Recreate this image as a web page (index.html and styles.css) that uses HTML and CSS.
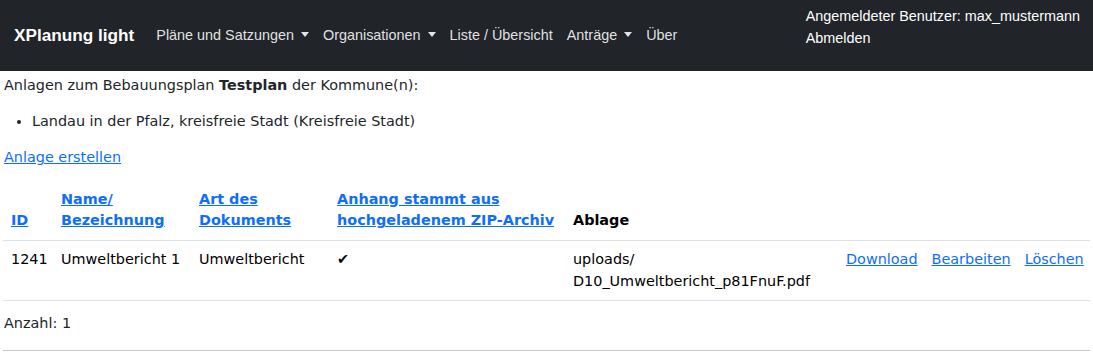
FILE: index.html
```html
<!DOCTYPE html>
<html lang="de">
<head>
<meta charset="utf-8">
<title>XPlanung light</title>
<link rel="stylesheet" href="styles.css">
</head>
<body>
<nav class="navbar">
  <a class="brand" href="#">XPlanung light</a>
  <ul class="nav">
    <li><a href="#" class="dropdown">Pläne und Satzungen</a></li>
    <li><a href="#" class="dropdown">Organisationen</a></li>
    <li><a href="#">Liste / Übersicht</a></li>
    <li><a href="#" class="dropdown">Anträge</a></li>
    <li><a href="#">Über</a></li>
  </ul>
  <div class="user">
    <div>Angemeldeter Benutzer: max_mustermann</div>
    <a href="#">Abmelden</a>
  </div>
</nav>
<main class="content">
  <p class="intro">Anlagen zum Bebauungsplan <b>Testplan</b> der Kommune(n):</p>
  <ul class="kommunen">
    <li>Landau in der Pfalz, kreisfreie Stadt (Kreisfreie Stadt)</li>
  </ul>
  <p class="create"><a href="#">Anlage erstellen</a></p>
  <table class="table">
    <thead>
      <tr>
        <th class="c-id"><a href="#">ID</a></th>
        <th class="c-name"><a href="#">Name/<br>Bezeichnung</a></th>
        <th class="c-art"><a href="#">Art des<br>Dokuments</a></th>
        <th class="c-zip"><a href="#">Anhang stammt aus<br>hochgeladenem ZIP-Archiv</a></th>
        <th class="c-ablage">Ablage</th>
        <th class="c-actions"></th>
      </tr>
    </thead>
    <tbody>
      <tr>
        <td>1241</td>
        <td>Umweltbericht 1</td>
        <td>Umweltbericht</td>
        <td>✔</td>
        <td>uploads/<br>D10_Umweltbericht_p81FnuF.pdf</td>
        <td class="actions"><a href="#">Download</a><a href="#">Bearbeiten</a><a href="#">Löschen</a></td>
      </tr>
    </tbody>
  </table>
  <p class="count">Anzahl: 1</p>
  <hr class="rule">
</main>
</body>
</html>
```

FILE: styles.css
```css
* { box-sizing: border-box; }
html, body { margin: 0; padding: 0; }
body {
  font-family: "DejaVu Sans", sans-serif;
  font-size: 14.4px;
  line-height: 1.5;
  color: #212529;
  background: #fff;
}
a { color: #0d6efd; text-decoration: underline; }

.navbar {
  background: #212529;
  height: 71px;
  display: flex;
  align-items: center;
  padding: 0 13px 0 14px;
  font-family: "Liberation Sans", Arial, sans-serif;
}
.brand {
  color: #fff;
  font-weight: bold;
  font-size: 17.2px;
  text-decoration: none;
  margin-right: 22px;
  margin-top: 1px;
}
.nav {
  list-style: none;
  margin: 0;
  padding: 0;
  display: flex;
  flex: 1;
}
.nav a {
  color: rgba(255,255,255,0.88);
  text-decoration: none;
  font-size: 14.4px;
  display: inline-block;
  padding: 0 7px;
}
.nav li:first-child a { padding-left: 0; }
.dropdown::after {
  content: "";
  display: inline-block;
  margin-left: 7px;
  vertical-align: 3px;
  border-top: 5px solid rgba(255,255,255,0.88);
  border-left: 4.5px solid transparent;
  border-right: 4.5px solid transparent;
}
.user {
  color: #fff;
  font-size: 14.4px;
  line-height: 22px;
  align-self: flex-start;
  padding-top: 5px;
}
.user a { color: #fff; text-decoration: none; }

.content { padding: 0 3px; }
.intro { margin: 4px 0 0 1px; }
.kommunen { margin: 14px 0 0; padding-left: 29px; }
.create { margin: 15px 0 0 1px; }

.table {
  width: 100%;
  table-layout: fixed;
  border-collapse: collapse;
  margin-top: 12px;
  color: #000;
}
.table th, .table td {
  padding: 8px;
  text-align: left;
  vertical-align: top;
  border-bottom: 1px solid #dee2e6;
}
.table th { vertical-align: bottom; font-weight: bold; }
.table th a { color: #0d6efd; }
.c-id { width: 50px; }
.c-name { width: 138px; }
.c-art { width: 138px; }
.c-zip { width: 236px; }
.c-ablage { width: 273px; }
.table td.actions { text-align: right; white-space: nowrap; padding-right: 7px; }
.actions a + a { margin-left: 14px; }

.count { margin: 12px 0 0 1px; }
.rule {
  margin: 15px 0 0;
  border: 0;
  border-top: 1px solid #c8c8c8;
}
```
